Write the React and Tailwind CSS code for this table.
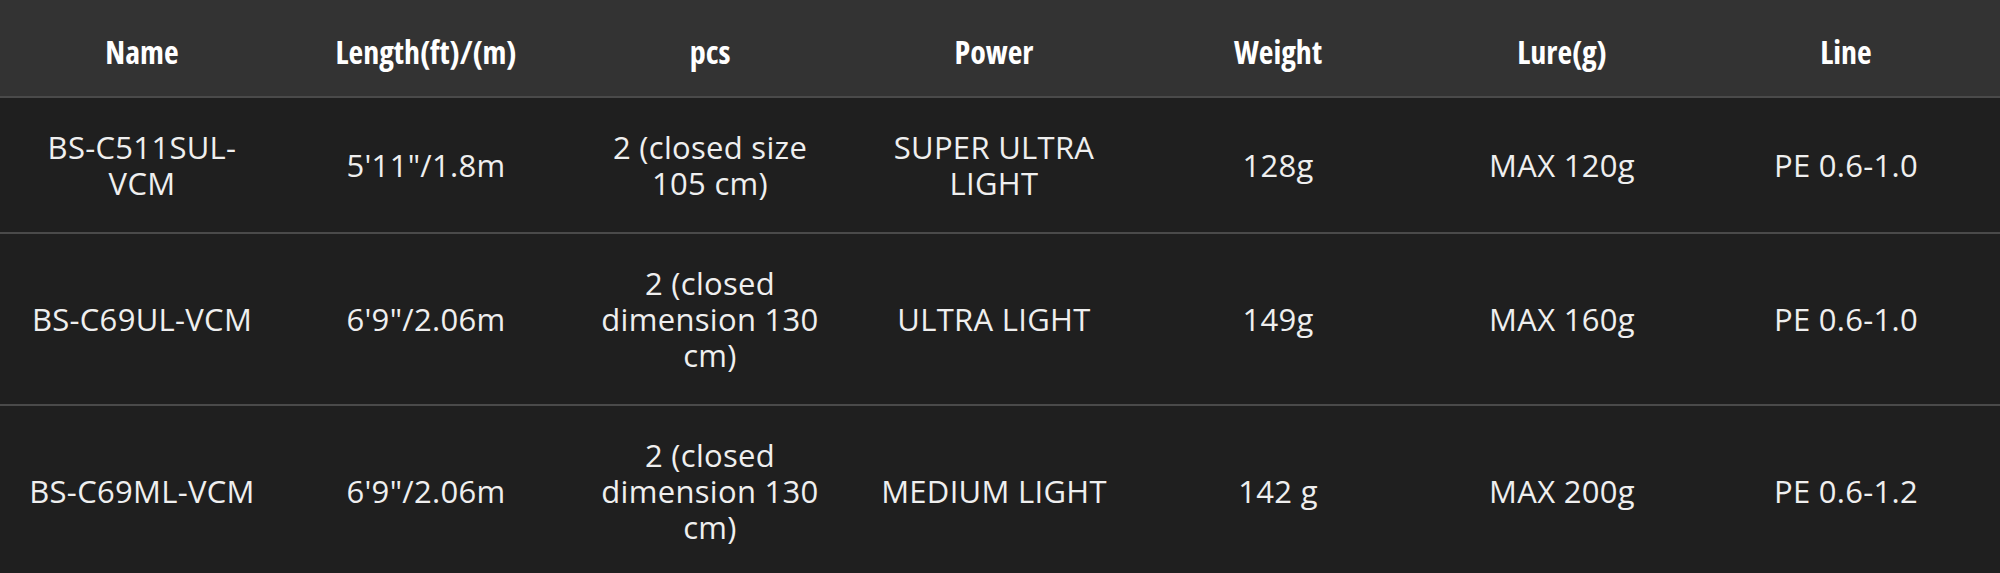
import React from 'react';

const columns = ['Name', 'Length(ft)/(m)', 'pcs', 'Power', 'Weight', 'Lure(g)', 'Line'];

const rods = [
    ['BS-C511SUL-VCM', '5\'11"/1.8m', '2 (closed size 105 cm)', 'SUPER ULTRA LIGHT', '128g', 'MAX 120g', 'PE 0.6-1.0'],
    ['BS-C69UL-VCM', '6\'9"/2.06m', '2 (closed dimension 130 cm)', 'ULTRA LIGHT', '149g', 'MAX 160g', 'PE 0.6-1.0'],
    ['BS-C69ML-VCM', '6\'9"/2.06m', '2 (closed dimension 130 cm)', 'MEDIUM LIGHT', '142 g', 'MAX 200g', 'PE 0.6-1.2'],
];

const App = () => {
    return (
        <div className="w-full min-h-screen bg-[#1f1f1f] text-[#efefef]">
            {/* Header */}
            <div className="grid grid-cols-[repeat(7,284px)] bg-[#333333] border-b-2 border-[#4a4a4a]">
                {columns.map((col) => (
                    <div
                        key={col}
                        className="px-6 pt-[34px] pb-[26px] text-center text-white font-bold text-[32px] leading-9 font-stretch-[75%] font-['Open_Sans',sans-serif]"
                    >
                        {col}
                    </div>
                ))}
            </div>

            {/* Rows */}
            {rods.map((rod, i) => (
                <div
                    key={i}
                    className="grid grid-cols-[repeat(7,284px)] border-b-2 border-[#4a4a4a] font-['Open_Sans',sans-serif]"
                >
                    {rod.map((cell, j) => (
                        <div key={j} className="px-6 py-[31px] flex items-center justify-center text-center text-[31px] leading-9 tracking-[0.3px]">
                            {cell}
                        </div>
                    ))}
                </div>
            ))}
        </div>
    );
};

export default App;
